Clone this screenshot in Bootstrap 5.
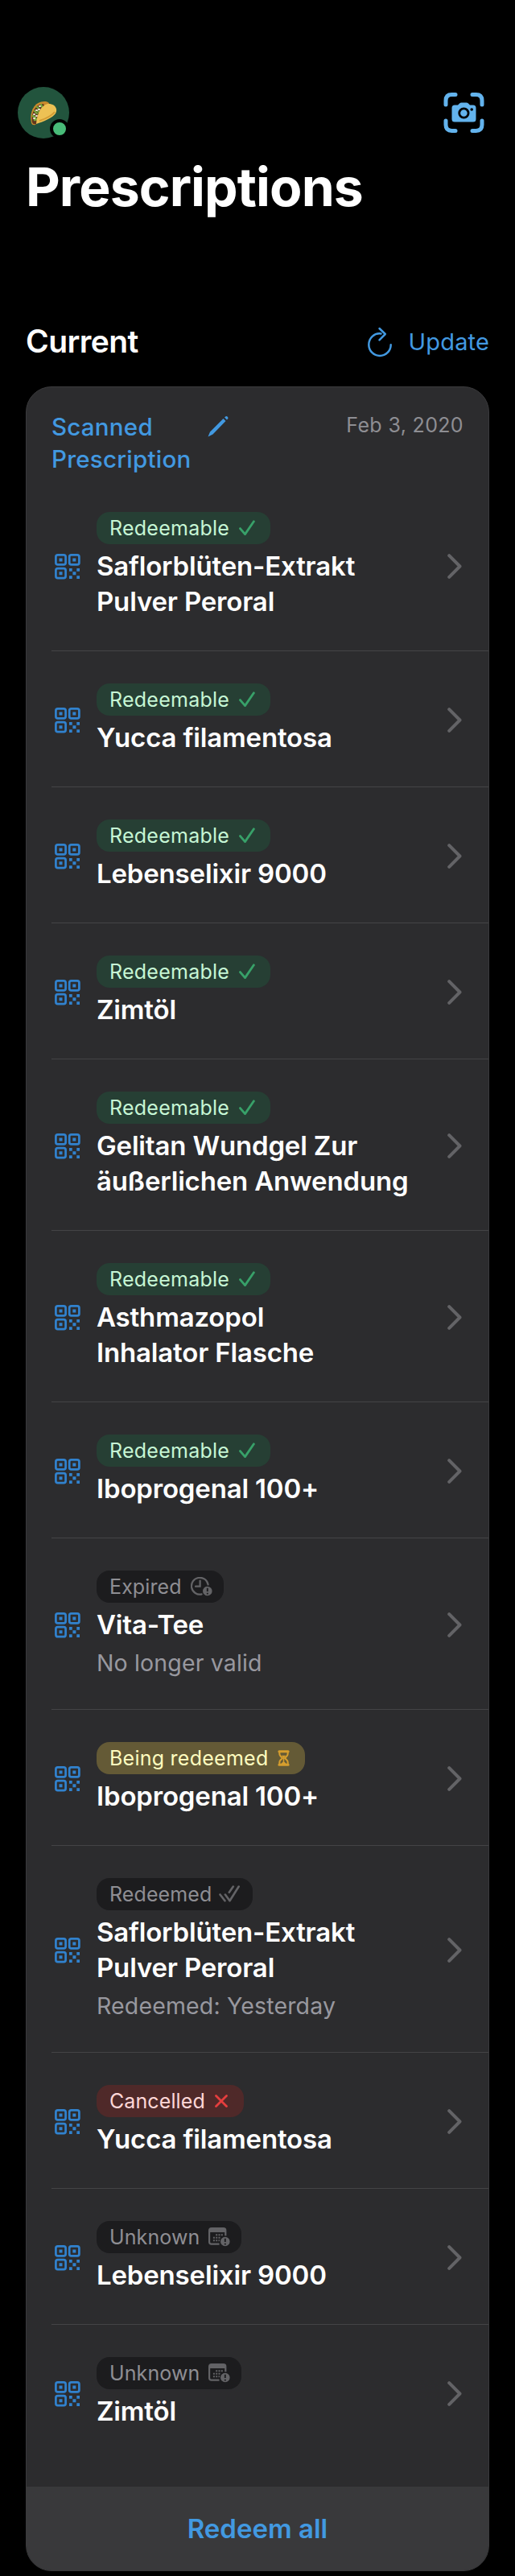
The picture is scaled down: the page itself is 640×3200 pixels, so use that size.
<!DOCTYPE html>
<html lang="en" data-bs-theme="dark">
<head>
<meta charset="utf-8">
<meta name="viewport" content="width=device-width, initial-scale=1">
<title>Prescriptions</title>
<link href="https://cdn.jsdelivr.net/npm/bootstrap@5.3.0/dist/css/bootstrap.min.css" rel="stylesheet">
<style>
body{background:#000;font-family:Inter,"Liberation Sans",sans-serif;color:#fff}
svg{display:block;flex:none}
.screen{height:3200px;padding:108px 32px 0;overflow:hidden}
.topbar{height:64px;margin:0 6px 0 -10px}
.avatar{width:64px;height:64px;background:#22543d}
.online{right:0;bottom:0;width:24px;height:24px;background:#48bb78;border:4px solid #000}
h1{font-size:66px;font-weight:700;line-height:80px;margin:20px 0 0;letter-spacing:-.9px}
.section-bar{height:60px;margin-top:123px}
h2{font-size:39px;font-weight:600;line-height:46px;padding-bottom:2px;letter-spacing:-.6px}
.update{font-size:29px;line-height:40px;letter-spacing:.15px;gap:20px}
.blue{color:#4299e1}
.rx-card{--bs-card-bg:#2c2c2e;--bs-card-border-color:#3a3a3c;--bs-card-border-radius:32px;--bs-card-inner-border-radius:31px;height:2714px;margin-top:25px;overflow:hidden}
.rx-head{height:115px;padding:29px 31px 0}
.rx-title{font-size:29.5px;font-weight:500;line-height:40px;width:193px;letter-spacing:.25px}
.rx-pencil{margin-top:6px}
.rx-date{font-size:25px;line-height:34px;color:#8e8e93;letter-spacing:.35px;margin:1px 0 0 auto}
.card>.rx-list{margin-left:31px;border:0}
.rx-list .list-group-item{background:none;border:0;border-bottom:1px solid #444446;color:#fff;padding:40px 33px 40px 4px;display:flex;align-items:center}
.rx-list .list-group-item:last-child{border-bottom:0}
.qr{margin:3px 20px 0 0}
.chev{margin:3px 0 0 auto}
.rx-name{font-size:33px;font-weight:600;line-height:44px;padding-top:5px;margin-bottom:-1px;letter-spacing:-.17px}
.rx-sub{font-size:28.5px;line-height:40px;padding-top:7px;margin-bottom:-3px;color:#98989f;letter-spacing:.15px}
.pill{height:40px;width:max-content;padding:0 16px;border-radius:16px;font-size:25px;line-height:40px;letter-spacing:.25px;display:flex;align-items:center;gap:8px}
.ok{background:#263f34;color:#c6f6d5}
.off{background:#1c1c1e;color:#8e8e93;letter-spacing:.1px}
.wait{background:#645a36;color:#fefcbf}
.bad{background:#4f2929;color:#fed7d7;letter-spacing:.1px}
.i-check,.i-glass{margin:0 3px 0 4px}
.i-clock,.i-cal{margin:0 -2px 0 3px}
.i-double{margin-left:1px}
.i-cross{margin:0 4px}
.rx-foot{background:#39393b;height:104px;margin-top:auto;font-size:33px;font-weight:600;line-height:104px}
</style>
</head>
<body>
<svg width="0" height="0" class="position-absolute">
<defs>
<symbol id="qr" viewBox="0 0 32 32"><g fill="none" stroke="#3182ce" stroke-width="2.7"><rect x="1.4" y="1.4" width="12.2" height="12" rx="2.4"/><rect x="18.2" y="1.4" width="12.2" height="12" rx="2.4"/><rect x="1.4" y="18.2" width="12.2" height="12" rx="2.4"/></g><path fill="#3182ce" d="M5.500 5.400h4v4h-4zM22.300 5.400h4v4h-4zM5.500 22.200h4v4h-4zM22.400 22.200h4v4h-4zM18 18h3.700v3.700h-3.700zM27.300 18h3.700v3.700h-3.700zM18 27.200h3.700v3.700h-3.700zM27.300 27.200h3.700v3.700h-3.700z"/></symbol>
<symbol id="chev" viewBox="0 0 18 31"><path d="M2.200 2.200l13.300 13.300L2.200 28.800" fill="none" stroke="#636366" stroke-width="4" stroke-linecap="round" stroke-linejoin="round"/></symbol>
<symbol id="check" viewBox="0 0 20 20"><path d="M1.500 10.600l6 7L18.400 1.800" fill="none" stroke="#38a169" stroke-width="2.800" stroke-linecap="round" stroke-linejoin="round"/></symbol>
<symbol id="clock" viewBox="1 1.500 27 24"><path d="M22.600 11A10.400 10.400 0 1 0 14.600 22.900M12.600 6v7.200H7" fill="none" stroke="#636366" stroke-width="2.200" stroke-linecap="round"/><circle cx="21.800" cy="19" r="5.800" fill="#636366"/><path d="M21.800 15.200v4.200M21.800 21.200v1.800" stroke="#1c1c1e" stroke-width="1.900"/></symbol>
<symbol id="cal" viewBox="1 1.500 27 24"><path d="M14.500 22.200H4.700Q2.100 22.200 2.100 19.600V5.200Q2.100 2.700 4.700 2.700H19.700Q22.300 2.700 22.300 5.200V12" fill="none" stroke="#636366" stroke-width="2.200"/><path fill="#636366" d="M2 3h20.500v4.600H2zM10.200 9.800h2v2h-2zM13.500 9.800h2v2h-2zM16.800 9.800h2v2h-2zM6.900 13.300h2v2h-2zM10.200 13.300h2v2h-2zM13.500 13.300h2v2h-2zM6.900 16.800h2v2h-2zM10.200 16.800h2v2h-2zM13.500 16.800h2v2h-2z"/><circle cx="21.800" cy="19" r="6.400" fill="#636366" stroke="#1c1c1e" stroke-width="1.200"/><path d="M21.800 15.200v4.200M21.800 21.200v1.800" stroke="#1c1c1e" stroke-width="1.900"/></symbol>
</defs>
</svg>
<main class="screen">
  <div class="topbar d-flex justify-content-between align-items-center">
    <div class="avatar rounded-circle position-relative d-flex align-items-center justify-content-center">
      <svg width="34" height="32" viewBox="0 0 34 32"><path d="M2 29C-1 16 5 2 18 2C24 2 25 5 24 8L7 31Q3 32 2 29z" fill="#c88a2c"/><path d="M3 28C1 17 7 5 17 5l2 5L8 30Q4 31 3 28z" fill="#60371e"/><path d="M6 14l3 3M9 9l3 3M14 6l2 4M4 20l3 2M6 25l3-1M10 14l2 2" stroke="#74a83c" stroke-width="2.400" stroke-linecap="round"/><path d="M8 13h1M5 18h1M8 20h1M12 8h1M5 23h1M11 12h1" stroke="#eee4d4" stroke-width="2" stroke-linecap="round"/><path d="M8 30C9 15 16 4 25 5C32 6 35 12 32 17C29 22 17 27 8 30z" fill="#edc154"/><path d="M12 26C22 23 29 18 31 15" stroke="#d39c35" stroke-width="2" fill="none"/></svg>
      <span class="online position-absolute rounded-circle"></span>
    </div>
    <svg width="51" height="51" viewBox="0 0 51 51"><path d="M3 15V10Q3 2.600 10.400 2.600H15M36 2.600h4.600Q48 2.600 48 10v5M3 35v5Q3 47.400 10.400 47.400H15M36 47.400h4.600Q48 47.400 48 40v-5" fill="none" stroke="#63b3ed" stroke-width="5" stroke-linecap="round"/><path d="M14 15.500h4l2-2Q21 12.500 22.500 12.500h6Q30 12.500 31 13.500l2 2h4Q40.500 15.500 40.500 19V33Q40.500 36.500 37 36.500H14Q10.500 36.500 10.500 33V19Q10.500 15.500 14 15.500z" fill="#63b3ed"/><circle cx="25.400" cy="25.500" r="5.700" fill="none" stroke="#000" stroke-width="2.800"/><circle cx="35.200" cy="21" r="1.800" fill="#000"/></svg>
  </div>
  <h1>Prescriptions</h1>
  <div class="section-bar d-flex justify-content-between align-items-center">
    <h2 class="m-0">Current</h2>
    <div class="update blue d-flex align-items-center"><svg width="32" height="38" viewBox="0 0 32 38"><path d="M17.500 8.500C9 7.300 2.300 14 2.300 22.300a13.700 13.700 0 0 0 27.400 0M15.500 2l7.300 7-7.300 7.300" fill="none" stroke="#4299e1" stroke-width="2.500" stroke-linecap="round" stroke-linejoin="round"/></svg><span>Update</span></div>
  </div>
  <section class="rx-card card">
    <div class="rx-head d-flex align-items-start">
      <div class="rx-title blue">Scanned Prescription</div>
      <svg class="rx-pencil" width="28" height="28" viewBox="0 0 28 28"><path d="M1.500 26.500L4 20.500 20.500 4 23.500 7 7.500 23.500zM22 2.600L23.500 1.300Q24.600.500 25.800 1.700T26.300 4L25 5.600z" fill="#4299e1"/></svg>
      <div class="rx-date">Feb 3, 2020</div>
    </div>
    <div class="rx-list list-group list-group-flush" id="items"></div>
    <div class="rx-foot blue text-center">Redeem all</div>
  </section>
</main>
<script>
const states = {
  ok: ['ok', 'Redeemable', '<svg class="i-check" width="20" height="20"><use href="#check"/></svg>'],
  expired: ['off', 'Expired', '<svg class="i-clock" width="27" height="24"><use href="#clock"/></svg>'],
  wait: ['wait', 'Being redeemed', '<svg class="i-glass" width="15" height="22" viewBox="3 1 16 22"><path d="M5 3.200h12M5 20.800h12" stroke="#d69e2e" stroke-width="3.200" stroke-linecap="round"/><path d="M5.500 3v3.500Q5.500 8 7 9.500L9.500 12 7 14.500Q5.500 16 5.500 17.500V21M16.500 3v3.500Q16.500 8 15 9.500L12.500 12 15 14.500Q16.500 16 16.500 17.500V21" fill="none" stroke="#d69e2e" stroke-width="2.200"/><path d="M8 8.500h6l-3 3.500zM6.500 20.500l4.500-4.500 4.500 4.500zM10.200 11h1.600v6h-1.600z" fill="#d69e2e"/></svg>'],
  redeemed: ['off', 'Redeemed', '<svg class="i-double" width="26" height="22" viewBox="1 1 26 22"><path d="M2.500 12.500l6 7.700M8.900 12.500l5.600 7.700L25.700 2.500M13.800 9.800L18.800 2.500" fill="none" stroke="#636366" stroke-width="2.600" stroke-linecap="round" stroke-linejoin="round"/></svg>'],
  bad: ['bad', 'Cancelled', '<svg class="i-cross" width="16" height="16" viewBox="3.500 3.500 16 16"><path d="M5 5l13 13M18 5L5 18" stroke="#e53e3e" stroke-width="2.800" stroke-linecap="round"/></svg>'],
  unknown: ['off', 'Unknown', '<svg class="i-cal" width="27" height="24"><use href="#cal"/></svg>']
};
const items = [
  ['ok', 'Saflorblüten-Extrakt<br>Pulver Peroral'], ['ok', 'Yucca filamentosa'], ['ok', 'Lebenselixir 9000'], ['ok', 'Zimtöl'],
  ['ok', 'Gelitan Wundgel Zur<br>äußerlichen Anwendung'], ['ok', 'Asthmazopol<br>Inhalator Flasche'], ['ok', 'Iboprogenal 100+'],
  ['expired', 'Vita-Tee', 'No longer valid'], ['wait', 'Iboprogenal 100+'], ['redeemed', 'Saflorblüten-Extrakt<br>Pulver Peroral', 'Redeemed: Yesterday'],
  ['bad', 'Yucca filamentosa'], ['unknown', 'Lebenselixir 9000'], ['unknown', 'Zimtöl']
];
document.getElementById('items').innerHTML = items.map(([s, name, sub]) => {
  const [cls, label, icon] = states[s];
  return `<div class="list-group-item"><svg class="qr" width="32" height="32"><use href="#qr"/></svg><div><div class="pill ${cls}"><span>${label}</span>${icon}</div><div class="rx-name">${name}</div>${sub ? `<div class="rx-sub">${sub}</div>` : ''}</div><svg class="chev" width="18" height="31"><use href="#chev"/></svg></div>`;
}).join('');
</script>
<script src="https://cdn.jsdelivr.net/npm/bootstrap@5.3.0/dist/js/bootstrap.bundle.min.js"></script>
</body>
</html>
